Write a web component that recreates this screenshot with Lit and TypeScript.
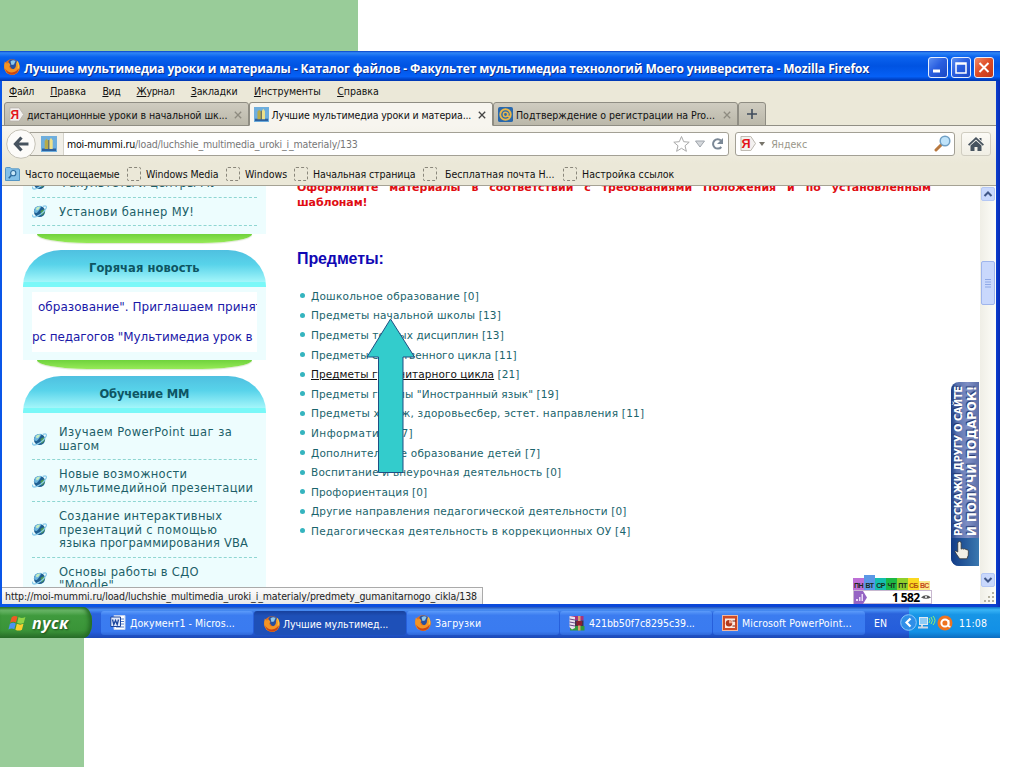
import { LitElement, html, css, svg, nothing } from "lit";
import { customElement, property, query } from "lit/decorators.js";
import { classMap } from "lit/directives/class-map.js";
import { styleMap } from "lit/directives/style-map.js";

const firefox = html`<svg viewBox="0 0 16 16">
  <circle cx="8" cy="8" r="7.800" fill="#e8701a" />
  <path d="M4.500 2Q9-1 13 2.500q2 2.500 1 5.500Q11 11.500 7.500 9.500L5 6Z" fill="#274f9e" />
  <path d="M6.500 2.500q2.500-2 5-.5L10 5.500 7.500 6Z" fill="#8cc8ee" />
  <path d="M.8 2.500 2.600 4.500 5 3.800 6.500 6 5 7.500Q6 11 9.500 10.200 12.500 9 12 3.500q3.500 2.500 3.500 6Q13.500 15.800 8 15.800 1 15.200.2 8.500 0 5.500.8 2.500Z" fill="#f39425" />
  <path d="M1 9.500Q4 14 9 13.300q4-.5 6-4.800Q14 15.600 8 15.800 2.500 15.500 1 9.500Z" fill="#c94514" />
  <path d="M13 2.500q2.600 3.500 1 7" stroke="#fbc33c" stroke-width="1.500" fill="none" />
</svg>`;

const site = html`<svg viewBox="0 0 16 16">
  <rect width="16" height="16" fill="#6eaedd" />
  <path d="M1 12.500h14V15H1z" fill="#2d62a0" />
  <path d="M3.700 13V5l1.800-2.200L7.300 5v8z" fill="#b8ab48" />
  <path d="M8.300 13V4.500L10 1.800l1.700 2.700V13z" fill="#eee08a" />
  <path d="M7.800 4v9" stroke="#66604a" />
</svg>`;

const yandex = html`<svg viewBox="0 0 17 16">
  <path d="M1 .5h10.500l5 7.500-5 7.500H1z" fill="#f3f1ef" stroke="#b9b4ac" />
  <text x="6.500" y="12.800" text-anchor="middle" font-family="Liberation Sans" font-weight="700" font-size="13.500" fill="#e3131b">Я</text>
</svg>`;

const mail = html`<svg viewBox="0 0 16 16">
  <rect width="16" height="16" rx="2" fill="#2968ac" />
  <circle cx="8" cy="8" r="5.600" fill="none" stroke="#e8b74c" stroke-width="2" />
  <circle cx="8" cy="8" r="2.300" fill="none" stroke="#e8b74c" stroke-width="1.600" />
  <path d="M10.500 6v4h3" stroke="#e8b74c" stroke-width="1.300" fill="none" />
</svg>`;

const folder = html`<svg viewBox="0 0 16 15">
  <path d="M.5 14.500V1.500q0-1 1-1h4l1.500 1.500h7.500q1 0 1 1v11.500z" fill="#83c0e8" stroke="#4a8fc2" />
  <circle cx="8.800" cy="6.600" r="2.800" fill="#c9e8f9" stroke="#2c6a9d" stroke-width="1.200" />
  <path d="M6.800 8.800 4 12" stroke="#2c6a9d" stroke-width="1.600" />
</svg>`;

const globe = html`<svg viewBox="0 0 14 12">
  <circle cx="7" cy="6" r="5.200" fill="#1f5f92" />
  <path d="M2 7Q1.500 3 5 1.200q3-1 4 0L6.500 5 4.500 7.500Z" fill="#6cb4de" />
  <path d="M3.500 3.500Q5 1 7.500 1.500L6.500 4 4.500 5Z" fill="#c4ecc0" />
  <path d="M8 5.500l3-1.500.8 3L9 10Z" fill="#4f9c50" />
  <path d="M10 1.300Q14-.3 13.300 2.700 11 7.500 4.500 10.500 0 12.300.6 9" fill="none" stroke="#8accec" stroke-width="1.200" />
</svg>`;

const word = html`<svg viewBox="0 0 16 16">
  <path d="M4 .5h11v14H4z" fill="#fff" stroke="#c3d2f0" />
  <path d="M10 4h4M10 6.500h4M10 9h4M6 12h8" stroke="#4f78c8" />
  <path d="M.8 2h9.700v9.500H.8z" fill="#dfe8fb" stroke="#1c459c" />
  <path d="m2.500 4.500 1.300 5 1.700-4 1.700 4 1.300-5" fill="none" stroke="#1c459c" stroke-width="1.300" />
</svg>`;

const rar = html`<svg viewBox="0 0 16 16">
  <path d="M1 1h13.500v4.500H1z" fill="#a8327c" />
  <path d="M1 5.500h13.500V11H1z" fill="#40324c" />
  <path d="M1 11h14.500v4.500H1z" fill="#2f9a3c" />
  <path d="M.5 1 6 2v11l-3 1.500L.5 12z" fill="#e9e2ee" />
  <path d="m.5 4 5.500 1M.5 7 6 8M.5 10l5.500 1" stroke="#6a4c86" />
  <path d="M9 1h2.500v14.500H9z" fill="#d8a070" />
  <path d="M7.500 6H13v4.500H7.500z" fill="#8b2030" />
</svg>`;

const powerpoint = html`<svg viewBox="0 0 16 16">
  <rect x=".5" y=".5" width="15" height="15" fill="#cf4a26" stroke="#f0b8a0" />
  <path d="M3 3.500h10v9.500H3z" fill="#fbe9e0" />
  <circle cx="7" cy="8.300" r="3.200" fill="#b2381c" />
  <path d="M7 8.300V5a3.300 3.300 0 0 1 3.200 3.300z" fill="#f5a888" />
  <path d="M10.500 11h2.500M10.500 6H14" stroke="#702010" />
</svg>`;

const plus = html`<svg viewBox="0 0 10 10"><path d="M5 0v10M0 5h10" stroke="#3f4c5c" stroke-width="1.600" /></svg>`;
const cross = html`<svg viewBox="0 0 8 8"><path d="m.8.8 6.400 6.400M7.200.8.8 7.200" stroke="currentColor" stroke-width="1.300" /></svg>`;

// Keeps a line of text at an exact width by spreading the difference over its letters.
@customElement("fit-line")
export class FitLine extends LitElement {
  @property({ type: Number }) w = 0;
  @query("span") line!: HTMLElement;

  static styles = css`
    :host {
      display: block;
      flex: none;
      white-space: nowrap;
    }
    span {
      display: inline-block;
    }
  `;

  firstUpdated() {
    const count = (this.textContent || "").trim().length;
    const natural = this.line.offsetWidth;
    this.style.width = `${this.w}px`;
    if (count) this.line.style.letterSpacing = `${(this.w - natural) / count}px`;
  }

  render() {
    return html`<span><slot></slot></span>`;
  }
}

@customElement("browser-chrome")
export class BrowserChrome extends LitElement {
  menu: [string, number][] = [
    ["Файл", 25], ["Правка", 36], ["Вид", 18], ["Журнал", 38], ["Закладки", 47], ["Инструменты", 67], ["Справка", 42],
  ];

  tabs = [
    { icon: yandex, text: "дистанционные уроки в начальной шк...", w: 200, active: false },
    { icon: site, text: "Лучшие мультимедиа уроки и материа...", w: 200, active: true },
    { icon: mail, text: "Подтверждение о регистрации на Pro...", w: 199, active: false },
  ];

  bookmarks: [string, number][] = [
    ["Windows Media", 73], ["Windows", 42], ["Начальная страница", 103], ["Бесплатная почта H...", 109], ["Настройка ссылок", 92],
  ];

  static styles = css`
    :host {
      display: block;
      font-family: "DejaVu Sans Condensed", "DejaVu Sans", sans-serif;
      font-size: 10.5px;
      line-height: 14px;
      color: #111;
    }
    svg {
      display: block;
      width: 100%;
      height: 100%;
    }
    .title {
      display: flex;
      align-items: center;
      height: 30px;
      box-sizing: border-box;
      padding: 3px 6px 0 4px;
      background: linear-gradient(#0a3fc4 0, #2f86f6 6%, #0a62ee 20%, #0053e2 50%, #0560f6 85%, #003fc0 96%, #0036b0);
      color: #fff;
      font: 700 12px/16px "Open Sans", "Noto Sans", sans-serif;
      text-shadow: 1px 1px 0 #0a2f8c;
    }
    .title fit-line {
      padding-top: 2px;
    }
    .title .logo {
      width: 16px;
      height: 16px;
      margin: 0 4px 2px 0;
    }
    .controls {
      display: flex;
      gap: 3px;
      margin-left: auto;
    }
    .controls i {
      width: 20px;
      height: 21px;
      box-sizing: border-box;
      border: 1px solid #e6eefc;
      border-radius: 3px;
      background: linear-gradient(135deg, #5c8ff2, #2a5fe0 45%, #1a48c4);
    }
    .controls i.close {
      background: linear-gradient(135deg, #f08a68, #dd4a24 50%, #c0381a);
    }
    .menu {
      display: flex;
      gap: 16.2px;
      height: 20px;
      align-items: center;
      margin: 0 4px 0 2px;
      padding-left: 7px;
      background: #ebe8d8;
    }
    .tabs {
      display: flex;
      height: 25px;
      margin: 0 4px 0 2px;
      padding-left: 2px;
      box-sizing: border-box;
      background: #ebe8d8;
      box-shadow: inset 0 -1px #918f85;
    }
    .tab {
      display: flex;
      align-items: center;
      width: 244.500px;
      box-sizing: border-box;
      padding: 1px 6px 0 4px;
      margin-top: 1px;
      border: 1px solid #8f8d83;
      border-radius: 3px 3px 0 0;
      background: linear-gradient(#cfccc0, #bbb8aa);
    }
    .tab.active {
      background: #f7f5ef;
      border-bottom-color: #f7f5ef;
    }
    .tab .icon {
      width: 15px;
      height: 15px;
      margin-right: 3px;
    }
    .tab .x {
      width: 8px;
      height: 8px;
      margin-left: auto;
      color: #8e8b80;
    }
    .tab.active .x {
      color: #444;
    }
    .new {
      display: flex;
      align-items: center;
      justify-content: center;
      width: 28px;
      padding: 0;
    }
    .new div {
      width: 10px;
      height: 10px;
    }
    .nav {
      display: flex;
      align-items: center;
      height: 37px;
      margin: 0 4px 0 2px;
      padding: 0 5px 0 4px;
      background: linear-gradient(#f7f5ef, #ebe8d8);
    }
    .back {
      position: relative;
      z-index: 1;
      width: 30px;
      height: 30px;
      margin: -2px -10px 0 0;
    }
    .box {
      display: flex;
      align-items: center;
      height: 24px;
      box-sizing: border-box;
      border: 1px solid #a3a095;
      border-radius: 3px;
      background: #fff;
      margin-top: -2px;
    }
    .url {
      width: 704px;
      color: #777;
    }
    .url b {
      font-weight: 400;
      color: #000;
    }
    .ident {
      width: 37px;
      height: 22px;
      box-sizing: border-box;
      padding: 3px 6px 3px 14px;
      border-right: 1px solid #d5d3cb;
      background: #f1efe8;
      margin-right: 3px;
    }
    .actions {
      display: flex;
      align-items: center;
      width: 52px;
      height: 18px;
      margin-left: auto;
      margin-right: 4px;
    }
    .search {
      width: 220px;
      margin-left: 6px;
      padding: 0 2px 0 4px;
      color: #999689;
    }
    .search .ya {
      width: 16px;
      height: 15px;
    }
    .caret {
      border: 3px solid transparent;
      border-top: 4px solid #77746a;
      border-bottom: 0;
      margin: 0 6px 0 3px;
    }
    .lens {
      width: 18px;
      height: 17px;
      margin-left: auto;
    }
    .home {
      width: 30px;
      margin-left: 6px;
      padding: 3px 6px;
      border-color: #d0cdc1;
      background: linear-gradient(#fbfaf6, #f0eee4);
    }
    .marks {
      display: flex;
      align-items: center;
      height: 23px;
      box-sizing: border-box;
      margin: 0 4px 0 2px;
      padding-left: 3px;
      background: #ebe8d8;
      border-bottom: 1px solid #a5a294;
    }
    .folder {
      width: 15px;
      height: 14px;
      margin-right: 5px;
    }
    .mark {
      display: flex;
      align-items: center;
      gap: 5px;
      margin-left: 7px;
    }
    .mark i {
      width: 14px;
      height: 14px;
      box-sizing: border-box;
      border: 1px dashed #8a877b;
      border-radius: 2px;
    }
    .mark.wide {
      gap: 8px;
    }
    .mark.wide + .mark {
      margin-left: 9px;
    }
  `;

  render() {
    return html`
      <div class="title">
        <div class="logo">${firefox}</div>
        <fit-line w="845">Лучшие мультимедиа уроки и материалы - Каталог файлов - Факультет мультимедиа технологий Моего университета - Mozilla Firefox</fit-line>
        <div class="controls">
          <i><svg viewBox="0 0 18 19"><path d="M4 13h7" stroke="#fff" stroke-width="3" /></svg></i>
          <i><svg viewBox="0 0 18 19"><path d="M4 5h10v10H4zM4 6h10" stroke="#fff" stroke-width="1.500" fill="none" /></svg></i>
          <i class="close"><svg viewBox="0 0 18 19"><path d="m4.500 5 9 9m0-9-9 9" stroke="#fff" stroke-width="2" /></svg></i>
        </div>
      </div>
      <div class="menu">
        ${this.menu.map(([name, w]) => html`<fit-line w=${w}><u>${name[0]}</u>${name.slice(1)}</fit-line>`)}
      </div>
      <div class="tabs">
        ${this.tabs.map((tab) => html`<div class=${classMap({ tab: true, active: tab.active })}>
          <div class="icon">${tab.icon}</div>
          <fit-line w=${tab.w}>${tab.text}</fit-line>
          <div class="x">${cross}</div>
        </div>`)}
        <div class="tab new"><div>${plus}</div></div>
      </div>
      <div class="nav">
        <div class="back">
          <svg viewBox="0 0 30 30">
            <circle cx="15" cy="15" r="14.300" fill="#fcfbf9" stroke="#c4c1b6" />
            <path d="M15.500 8.500 9.500 15l6 6.500M10 15h12.500" fill="none" stroke="#47535f" stroke-width="3.200" />
          </svg>
        </div>
        <div class="box url">
          <div class="ident">${site}</div>
          <fit-line w="291"><b>moi-mummi.ru</b>/load/luchshie_multimedia_uroki_i_materialy/133</fit-line>
          <div class="actions">
            <svg viewBox="0 0 52 18">
              <path d="m9.500 1.500 2.200 5.200 5.500.5-4.200 3.600 1.400 5.500-4.900-3-4.900 3L6 10.800 1.800 7.200l5.500-.5z" fill="#fff" stroke="#aaa" />
              <path d="M23.500 6h9L28 12z" fill="#d5d8dc" stroke="#9fa5ac" />
              <path d="M49 5.500A4.700 4.700 0 1 0 49.300 12" fill="none" stroke="#7b8896" stroke-width="2" />
              <path d="M51 3v6h-6z" fill="#7b8896" />
            </svg>
          </div>
        </div>
        <div class="box search">
          <div class="ya">${yandex}</div>
          <div class="caret"></div>
          <fit-line w="36">Яндекс</fit-line>
          <div class="lens">
            <svg viewBox="0 0 18 17">
              <path d="M7.500 9.500 2 15" stroke="#b8783f" stroke-width="3" stroke-linecap="round" />
              <circle cx="11" cy="6" r="4.800" fill="#bfe3fa" stroke="#6f9fc4" stroke-width="1.500" />
            </svg>
          </div>
        </div>
        <div class="box home">
          <svg viewBox="0 0 16 16">
            <path d="M0 8.500 8 1l8 7.500-1.200 1.200L8 3.500 1.200 9.700zM2.500 9.500 8 4.700l5.500 4.800V15h-4v-4h-3v4h-4zM11.500 2h2v3l-2-2z" fill="#47535f" />
          </svg>
        </div>
      </div>
      <div class="marks">
        <div class="folder">${folder}</div>
        <fit-line w="95">Часто посещаемые</fit-line>
        ${this.bookmarks.map(([name, w]) => html`<div class=${classMap({ mark: true, wide: w === 109 })}><i></i><fit-line w=${w}>${name}</fit-line></div>`)}
      </div>
    `;
  }
}

@customElement("site-page")
export class SitePage extends LitElement {
  lessons: [string, number][][] = [
    [["Изучаем PowerPoint шаг за", 173], ["шагом", 40]],
    [["Новые возможности", 128], ["мультимедийной презентации", 194]],
    [["Создание интерактивных", 163], ["презентаций с помощью", 158], ["языка программирования VBA", 189]],
    [["Основы работы в СДО", 140], ['"Moodle"', 55]],
  ];

  subjects: [string, number, number][] = [
    ["Дошкольное образование", 0, 168],
    ["Предметы начальной школы", 13, 190],
    ["Предметы точных дисциплин", 13, 193],
    ["Предметы естественного цикла", 11, 206],
    ["Предметы гуманитарного цикла", 21, 208],
    ['Предметы группы "Иностранный язык"', 19, 248],
    ["Предметы худож, здоровьесбер, эстет. направления", 11, 333],
    ["Информатика", 7, 102],
    ["Дополнительное образование детей", 7, 229],
    ["Воспитание и внеурочная деятельность", 0, 250],
    ["Профориентация", 0, 116],
    ["Другие направления педагогической деятельности", 0, 316],
    ["Педагогическая деятельность в коррекционных ОУ", 4, 320],
  ];

  days = [
    ["ПН", "#bd6fd6"], ["ВТ", "#5b98e6"], ["СР", "#14bfae"], ["ЧТ", "#1cb845"], ["ПТ", "#8fd02c"], ["СБ", "#fbd820"], ["ВС", "#fbe98a"],
  ];

  static styles = css`
    :host {
      display: flex;
      position: relative;
      height: 418px;
      overflow: hidden;
      background: #fff;
      font-family: "DejaVu Sans", sans-serif;
    }
    svg {
      display: block;
      width: 100%;
      height: 100%;
    }
    aside {
      width: 243px;
      margin-left: 21px;
      font-size: 11.500px;
      line-height: 13.600px;
      color: #1c5f68;
    }
    .panel {
      background: #edfdfe;
      padding: 0 9px;
    }
    .first {
      height: 48px;
      box-sizing: border-box;
      display: flex;
      flex-direction: column;
      justify-content: flex-end;
      padding-bottom: 8px;
    }
    .item {
      display: flex;
      align-items: center;
      gap: 12px;
      padding: 8px 0 5.800px;
      border-bottom: 1px dashed #8fd6d2;
    }
    .item .globe {
      width: 15px;
      height: 13px;
      margin-top: -1px;
    }
    .cap {
      height: 9px;
      margin: 0 14px 7px;
      border-radius: 0 0 50px 50px / 0 0 9px 9px;
      background: linear-gradient(#6fd23c, #97ea58);
      box-shadow: 0 1px 1px #dfe6d4;
    }
    h3 {
      display: flex;
      align-items: center;
      justify-content: center;
      height: 37px;
      box-sizing: border-box;
      padding-top: 5px;
      margin: 0;
      border-radius: 38px 38px 0 0 / 36px 36px 0 0;
      border-bottom: 5px solid #7af8f8;
      background: linear-gradient(#4fc0e0, #58d3ea 45%, #a4f6fa);
      font-size: 11.500px;
      color: #0d5563;
    }
    .news {
      height: 73px;
      box-sizing: border-box;
      padding-top: 5px;
    }
    .ticker {
      display: flex;
      flex-direction: column;
      justify-content: center;
      gap: 16px;
      height: 60px;
      box-sizing: border-box;
      padding-top: 1px;
      overflow: hidden;
      background: #fff;
      color: #1a18a8;
      font-size: 12px;
    }
    .ticker .shift {
      margin-left: 6px;
    }
    .training {
      padding-top: 5px;
      height: 200px;
    }
    main {
      width: 634px;
      margin-left: 31px;
      font-size: 10.500px;
      color: #1a646c;
    }
    .notice {
      margin-top: -6px;
      font: 700 11px/15px "DejaVu Sans", sans-serif;
      color: #e00d12;
    }
    .notice p {
      margin: 0;
      text-align-last: justify;
    }
    h2 {
      margin: 39px 0 0;
      font: 700 16px/20px "Liberation Sans", sans-serif;
      color: #1008b4;
    }
    ul {
      margin: 17px 0 0;
      padding: 0;
      list-style: none;
    }
    li {
      display: flex;
      align-items: center;
      gap: 8px;
      height: 19.600px;
    }
    li::before {
      content: "";
      width: 5px;
      height: 5px;
      margin-left: 3px;
      margin-right: -2px;
      border-radius: 50%;
      background: #35b4bf;
    }
    .hover {
      color: #111;
      text-decoration: underline;
    }
    .scroll {
      display: flex;
      flex-direction: column;
      width: 16px;
      height: 418px;
      margin-left: auto;
      background: linear-gradient(90deg, #efeee6, #fdfdf8);
      box-sizing: border-box;
      padding: 1px 1px 0 1px;
    }
    .scroll i {
      width: 14px;
      height: 14px;
      box-sizing: border-box;
      border: 1px solid #b4c7f4;
      border-radius: 2px;
      background: #c9d8fc;
    }
    .scroll .thumb {
      height: 44px;
      margin: 60px 0 268px;
      padding: 16px 3px;
      border-color: #9fb5ec;
    }
    .grip {
      height: 12px;
      margin-top: 3px;
      margin-left: 2px;
    }
    .promo {
      position: absolute;
      left: 949px;
      top: 380px;
      display: flex;
      align-items: center;
      width: 184px;
      height: 28px;
      box-sizing: border-box;
      transform: rotate(-90deg);
      transform-origin: 0 0;
      border-radius: 8px 8px 0 0;
      background: linear-gradient(#1b3f87 0, #5871ae 20%, #7f8fc4 60%, #5c6ea8);
      color: #fff;
      text-shadow: 1px -1px 1px #22356c;
    }
    .promo .hand {
      width: 28px;
      height: 28px;
      border-radius: 8px 0 0 0;
      background: linear-gradient(#123b86, #3a78b0);
    }
    .small {
      font: 700 11px/13px "DejaVu Sans Condensed", "DejaVu Sans", sans-serif;
    }
    .big {
      font: 700 13px/13px "DejaVu Sans Condensed", "DejaVu Sans", sans-serif;
    }
    .promo .lines {
      margin-left: 2px;
    }
    .counter {
      position: absolute;
      left: 851px;
      top: 389px;
      width: 79px;
      font: 700 7px/9px "Liberation Sans", sans-serif;
      color: #1c2a1c;
    }
    .days {
      display: flex;
      align-items: flex-end;
      height: 15px;
    }
    .days i {
      width: 11px;
      padding-top: 3px;
      font-style: normal;
      text-align: center;
      letter-spacing: -0.5px;
    }
    .days i:nth-child(2) {
      padding-top: 6px;
    }
    .days i:nth-child(7) {
      padding-top: 0;
      color: #c4491a;
    }
    .days i:nth-child(6) {
      color: #b05010;
    }
    .total {
      display: flex;
      align-items: center;
      height: 14px;
      box-sizing: border-box;
      border: 1px solid #c8b8d0;
      background: #fff;
      color: #000;
      font: 700 12.500px/13px "DejaVu Sans Condensed", "Liberation Sans", sans-serif;
    }
    .total div {
      width: 13px;
      height: 13px;
      margin-right: 25px;
    }
    .total .eye {
      width: 10px;
      height: 6px;
      margin: 0 0 0 1px;
    }
    .total fit-line {
      font: 700 12px/13px "Open Sans", "Liberation Sans", sans-serif;
    }
    .status {
      position: absolute;
      left: 0;
      bottom: 0;
      height: 17px;
      box-sizing: border-box;
      padding: 1px 5px 0 3px;
      border: 1px solid #aaa;
      border-width: 1px 1px 0 0;
      background: linear-gradient(#fcfcfc, #e9e9e9);
      font: 10.500px/15px "DejaVu Sans Condensed", "DejaVu Sans", sans-serif;
      color: #222;
    }
  `;

  item(lines: [string, number][]) {
    return html`<div class="item">
      <div class="globe">${globe}</div>
      <div>${lines.map(([text, w]) => html`<fit-line w=${w}>${text}</fit-line>`)}</div>
    </div>`;
  }

  render() {
    return html`
      <aside>
        <div class="panel first">
          ${this.item([["Факультеты и центры МУ", 158]])}
          ${this.item([["Установи баннер МУ!", 135]])}
        </div>
        <div class="cap"></div>
        <h3><fit-line w="111">Горячая новость</fit-line></h3>
        <div class="panel news">
          <div class="ticker">
            <fit-line class="shift" w="232">образование". Приглашаем принять</fit-line>
            <fit-line w="221">рс педагогов "Мультимедиа урок в</fit-line>
          </div>
        </div>
        <div class="cap"></div>
        <h3><fit-line w="90">Обучение ММ</fit-line></h3>
        <div class="panel training">${this.lessons.map((lines) => this.item(lines))}</div>
      </aside>
      <main>
        <div class="notice">
          <p>Оформляйте материалы в соответствии с требованиями Положения и по установленным</p>
          <fit-line w="70">шаблонам!</fit-line>
        </div>
        <h2><fit-line w="87">Предметы:</fit-line></h2>
        <ul>
          ${this.subjects.map(([name, count, w]) => html`<li>
            <fit-line w=${w}><span class=${count === 21 ? "hover" : nothing}>${name}</span> [${count}]</fit-line>
          </li>`)}
        </ul>
      </main>
      <div class="scroll">
        <i><svg viewBox="0 0 12 12"><path d="m2.500 8 3.500-3.500L9.500 8" fill="none" stroke="#3f5687" stroke-width="2" /></svg></i>
        <i class="thumb"><svg viewBox="0 0 6 9"><path d="M0 1h6M0 3.500h6M0 6h6M0 8.500h6" stroke="#8ea8e6" /></svg></i>
        <i><svg viewBox="0 0 12 12"><path d="M2.500 4 6 7.500 9.500 4" fill="none" stroke="#3f5687" stroke-width="2" /></svg></i>
        <div class="grip"><svg viewBox="0 0 12 12"><path d="M9 3h2M5 7h2M9 7h2M1 11h2M5 11h2M9 11h2" stroke="#b5b2a2" stroke-width="2" /></svg></div>
      </div>
      <div class="promo">
        <div class="hand">
          <svg viewBox="0 0 28 29">
            <path transform="rotate(90 14 14)" d="M7 5q0-2 2-2 1.500 0 1.500 2v6q1-1 2.500 0 1.500-1 2.500.5 2-.5 2.500 1.500.5 5-1.500 8H9q-3-4-5-7.500.5-1.500 3 .5z" fill="#f2efe6" stroke="#333" stroke-width=".8" />
          </svg>
        </div>
        <div class="lines">
          <fit-line class="small" w="150">РАССКАЖИ ДРУГУ О САЙТЕ</fit-line>
          <fit-line class="big" w="150">И ПОЛУЧИ ПОДАРОК!</fit-line>
        </div>
      </div>
      <div class="counter">
        <div class="days">${this.days.map(([day, background]) => html`<i style=${styleMap({ background })}>${day}</i>`)}</div>
        <div class="total">
          <div><svg viewBox="0 0 13 13"><path d="M0 0h9l4 6.500L9 13H0z" fill="#9564c4" /><path d="M2 10h2V8H2zm3 0h1.500V6H5zm2.500 0H9V3H7.500z" fill="#e9d8f8" /></svg></div>
          <fit-line w="28">1 582</fit-line>
          <div class="eye"><svg viewBox="0 0 10 6"><path d="M0 3.500Q5-1 10 3.500 5 6 0 3.500" fill="#555" /><circle cx="5" cy="3" r="1" fill="#fff" /></svg></div>
        </div>
      </div>
      <div class="status"><fit-line w="472">http://moi-mummi.ru/load/luchshie_multimedia_uroki_i_materialy/predmety_gumanitarnogo_cikla/138</fit-line></div>
    `;
  }
}

@customElement("task-bar")
export class TaskBar extends LitElement {
  tasks = [
    { icon: word, text: "Документ1 - Micros...", w: 105, on: false },
    { icon: firefox, text: "Лучшие мультимед...", w: 105, on: true },
    { icon: firefox, text: "Загрузки", w: 46, on: false },
    { icon: rar, text: "421bb50f7c8295c39...", w: 106, on: false },
    { icon: powerpoint, text: "Microsoft PowerPoint...", w: 110, on: false },
  ];

  static styles = css`
    :host {
      display: flex;
      height: 31px;
      background: linear-gradient(#2453b8 0, #4a90f4 9%, #2a63dc 22%, #245ddb 80%, #1c48b4);
      color: #fff;
      font: 10.500px/14px "DejaVu Sans Condensed", "DejaVu Sans", sans-serif;
    }
    svg {
      display: block;
      width: 100%;
      height: 100%;
    }
    .start {
      display: flex;
      align-items: center;
      gap: 6px;
      width: 92px;
      box-sizing: border-box;
      padding-left: 8px;
      margin-right: 8px;
      border-radius: 0 9px 9px 0 / 0 14px 14px 0;
      background: linear-gradient(#2d7a2d 0, #6cb86a 10%, #3f9a3d 28%, #3a9438 75%, #2a6f2a);
      box-shadow: inset -3px 0 4px #246a24;
      font: italic 700 16px/20px "Open Sans", "Noto Sans", sans-serif;
      text-shadow: 1px 1px 2px #1c4c1c;
    }
    .flag {
      width: 19px;
      height: 18px;
    }
    .start fit-line {
      margin-left: -1px;
    }
    .task {
      display: flex;
      align-items: center;
      gap: 4px;
      width: 152px;
      height: 24px;
      box-sizing: border-box;
      margin: 4px 0 0 1px;
      padding-left: 9px;
      border-radius: 3px;
      background: linear-gradient(#5c9bfa, #3b7cf0 18%, #3a7bf0 85%, #2f68d8);
    }
    .task.on {
      background: linear-gradient(#17409c, #1e50b8 20%, #1e50b8);
      padding: 2px 0 0 10px;
      gap: 3px;
    }
    .task.on + .task {
      padding-left: 8px;
    }
    .icon {
      width: 16px;
      height: 16px;
    }
    .lang {
      margin: 0 22px 0 9px;
      align-self: center;
    }
    .tray {
      display: flex;
      align-items: center;
      flex: 1;
      background: linear-gradient(#0f73c8 0, #38b4f6 9%, #1795e6 25%, #1290e6 80%, #0c6cc0);
    }
    .arrow {
      width: 17px;
      height: 17px;
      margin-left: -9px;
    }
    .net {
      width: 19px;
      height: 17px;
    }
    .avast {
      width: 16px;
      height: 16px;
      margin: 0 6px 0 1px;
    }
  `;

  render() {
    return html`
      <div class="start">
        <div class="flag">
          <svg viewBox="0 0 18 17">
            <path d="M3.500 3Q6 1 9 2.500L7.500 8Q5 6.500 2 8.200Z" fill="#ee5a24" />
            <path d="M10 2.800Q13 4.500 16.500 2.800L15 8.300q-3 1.700-6.300 0Z" fill="#8fd447" />
            <path d="M1.800 9.200Q5 7.500 7.300 9L6 14.500Q3.500 13 .4 14.700Z" fill="#4c93f2" />
            <path d="M8.400 9.300q3 1.500 6.300 0l-1.500 5.500q-3 1.700-6.200 0Z" fill="#fbcf2e" />
          </svg>
        </div>
        <fit-line w="37">пуск</fit-line>
      </div>
      ${this.tasks.map((task) => html`<div class=${classMap({ task: true, on: task.on })}>
        <div class="icon">${task.icon}</div>
        <fit-line w=${task.w}>${task.text}</fit-line>
      </div>`)}
      <fit-line class="lang" w="13">EN</fit-line>
      <div class="tray">
        <div class="arrow">
          <svg viewBox="0 0 17 17">
            <circle cx="8.500" cy="8.500" r="7.800" fill="#2f8fe8" stroke="#8cc8fa" />
            <path d="M10.500 4.500 6.500 8.500l4 4" fill="none" stroke="#fff" stroke-width="2.200" />
          </svg>
        </div>
        <div class="net">
          <svg viewBox="0 0 19 17">
            <rect x="2.500" y="3.500" width="8" height="7" fill="#8ecbf5" stroke="#dfe9f2" />
            <path d="M1 13.500h10M5 11v2" stroke="#cfd8e2" stroke-width="2" />
            <path d="M12 4q2 2.500 0 5M14 3q3 3.500 0 7M16 2q4 4.500 0 9" fill="none" stroke="#8ff070" />
          </svg>
        </div>
        <div class="avast">
          <svg viewBox="0 0 16 16">
            <circle cx="8" cy="8" r="7.500" fill="#ee7320" />
            <circle cx="8" cy="8" r="3.600" fill="none" stroke="#fff" stroke-width="2" />
            <path d="M11.500 5v5.500q0 1.500 2 1" fill="none" stroke="#fff" stroke-width="1.700" />
          </svg>
        </div>
        <fit-line w="28">11:08</fit-line>
      </div>
    `;
  }
}

@customElement("app-root")
export class AppRoot extends LitElement {
  static styles = css`
    :host {
      display: block;
      position: relative;
      width: 1024px;
      height: 767px;
      overflow: hidden;
      background: #fff;
    }
    .band {
      width: 358px;
      height: 51px;
      background: #99cc99;
    }
    .foot {
      width: 84px;
      height: 129px;
      background: #99cc99;
    }
    .window {
      width: 1000px;
      height: 556px;
      overflow: hidden;
      background: linear-gradient(90deg, #0a56e8 0 2px, #0a3fd0 996px, #0a2cb4);
    }
    site-page {
      margin: 0 4px 0 2px;
    }
    task-bar {
      width: 1000px;
    }
    .pointer {
      position: absolute;
      left: 366px;
      top: 317px;
      width: 50px;
      height: 157px;
    }
  `;

  render() {
    return html`
      <div class="band"></div>
      <div class="window">
        <browser-chrome></browser-chrome>
        <site-page></site-page>
      </div>
      <task-bar></task-bar>
      <div class="foot"></div>
      <svg class="pointer" viewBox="0 0 50 157">
        ${svg`<path d="M24.500 2 48.500 40H37v115.500H12.500V40H1z" fill="#33cccc" stroke="#1f4f82" />`}
      </svg>
    `;
  }
}
